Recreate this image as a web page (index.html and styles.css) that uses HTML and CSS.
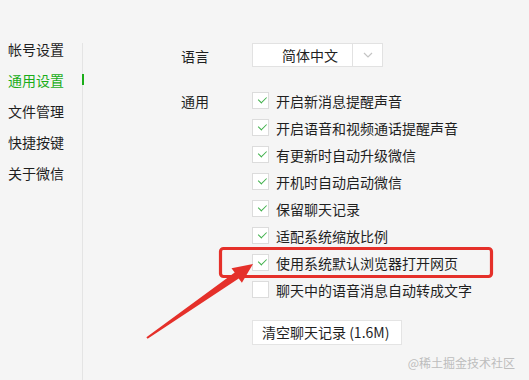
FILE: index.html
```html
<!DOCTYPE html>
<html lang="zh-CN">

<head>
    <meta charset="UTF-8">
    <meta name="viewport" content="width=device-width, initial-scale=1.0">
    <title>设置 | 通用设置</title>
    <link rel="stylesheet" href="styles.css">
</head>

<body>
    <div class="window">
        <nav class="sidebar">
            <div class="nav-item">帐号设置</div>
            <div class="nav-item active">通用设置</div>
            <div class="nav-item">文件管理</div>
            <div class="nav-item">快捷按键</div>
            <div class="nav-item">关于微信</div>
        </nav>

        <main class="panel">
            <div class="setting-row">
                <div class="setting-label lang-label">语言</div>
                <div class="select">
                    <span class="select-value">简体中文</span>
                    <span class="select-arrow">
                        <svg width="10" height="6" viewBox="0 0 10 6">
                            <path d="M1 1 L5 5 L9 1" fill="none" stroke="#c4c4c4" stroke-width="1.2" />
                        </svg>
                    </span>
                </div>
            </div>

            <div class="setting-row general">
                <div class="setting-label general-label">通用</div>
                <ul class="options">
                    <li class="option"><span class="checkbox checked"></span>开启新消息提醒声音</li>
                    <li class="option"><span class="checkbox checked"></span>开启语音和视频通话提醒声音</li>
                    <li class="option"><span class="checkbox checked"></span>有更新时自动升级微信</li>
                    <li class="option"><span class="checkbox checked"></span>开机时自动启动微信</li>
                    <li class="option"><span class="checkbox checked"></span>保留聊天记录</li>
                    <li class="option"><span class="checkbox checked"></span>适配系统缩放比例</li>
                    <li class="option"><span class="checkbox checked"></span>使用系统默认浏览器打开网页</li>
                    <li class="option"><span class="checkbox"></span>聊天中的语音消息自动转成文字</li>
                </ul>
            </div>

            <div class="setting-row actions">
                <button class="btn">清空聊天记录 (1.6M)</button>
            </div>
        </main>
    </div>

    <!-- annotation drawn over the screenshot -->
    <svg class="annotation" width="529" height="380" viewBox="0 0 529 380">
        <rect x="220.5" y="248.5" width="271" height="28" rx="3" fill="none" stroke="#e5302a" stroke-width="3.2" />
        <polygon fill="#e5302a"
            points="253,264 241.9,282.8 238.7,278.4 147.6,338.8 146.4,337.2 234.7,272.6 231.5,268.2" />
    </svg>

    <div class="watermark">@稀土掘金技术社区</div>
</body>

</html>
```

FILE: styles.css
```css
html,
body {
    margin: 0;
}

body {
    background-color: #f5f5f5;
    color: #1f1f1f;
    font-family: "Noto Sans CJK SC", "Noto Sans", sans-serif;
    font-size: 14px;
    width: 529px;
    height: 380px;
    overflow: hidden;
    position: relative;
}

.window {
    display: flex;
    height: 380px;
}

.sidebar {
    width: 82px;
    flex-shrink: 0;
    padding-top: 34px;
    padding-left: 8px;
    box-sizing: border-box;
}

.nav-item {
    position: relative;
    line-height: 31px;
    height: 31px;
}

.nav-item.active {
    color: #1aad19;
}

.nav-item.active::after {
    content: "";
    position: absolute;
    right: -2px;
    top: 9px;
    width: 2px;
    height: 11px;
    background-color: #1aad19;
}

.panel {
    flex: 1;
    margin-top: 43px;
    border-left: 1px solid #e4e4e4;
    padding-left: 98px;
}

.setting-row {
    display: flex;
    align-items: flex-start;
}

.setting-label {
    width: 71px;
    flex-shrink: 0;
}

.lang-label {
    line-height: 26px;
}

.general-label {
    line-height: 28px;
}

.select {
    display: flex;
    width: 131px;
    height: 24px;
    box-sizing: border-box;
    background-color: #fff;
    border: 1px solid #e2e2e2;
}

.select-value {
    width: 100px;
    padding-left: 29px;
    box-sizing: border-box;
    line-height: 22px;
    border-right: 1px solid #e2e2e2;
}

.select-arrow {
    flex: 1;
    display: flex;
    align-items: center;
    justify-content: center;
}

.general {
    margin-top: 18px;
}

.options {
    list-style: none;
    margin: 0;
    padding: 0;
}

.option {
    display: flex;
    align-items: center;
    height: 27px;
}

.checkbox {
    width: 17px;
    height: 17px;
    box-sizing: border-box;
    background-color: #fff;
    border: 1px solid #dcdcdc;
    margin-right: 7px;
    position: relative;
}

.checkbox.checked::after {
    content: "";
    position: absolute;
    left: 4px;
    top: 2px;
    width: 7px;
    height: 4px;
    border-left: 1px solid #3fb04a;
    border-bottom: 1px solid #3fb04a;
    transform: rotate(-45deg) translate(0, 2px);
}

.actions {
    margin-top: 17px;
    padding-left: 71px;
}

.btn {
    font-family: inherit;
    font-size: 14px;
    color: #1f1f1f;
    background-color: #fff;
    border: 1px solid #e4e4e4;
    height: 25px;
    width: 150px;
    padding: 0 0 0 9px;
    text-align: left;
    line-height: 23px;
}

.annotation {
    position: absolute;
    top: 0;
    left: 0;
}

.watermark {
    position: absolute;
    right: 14px;
    top: 355px;
    font-size: 12px;
    line-height: 16px;
    color: #bdbdbd;
}
```
